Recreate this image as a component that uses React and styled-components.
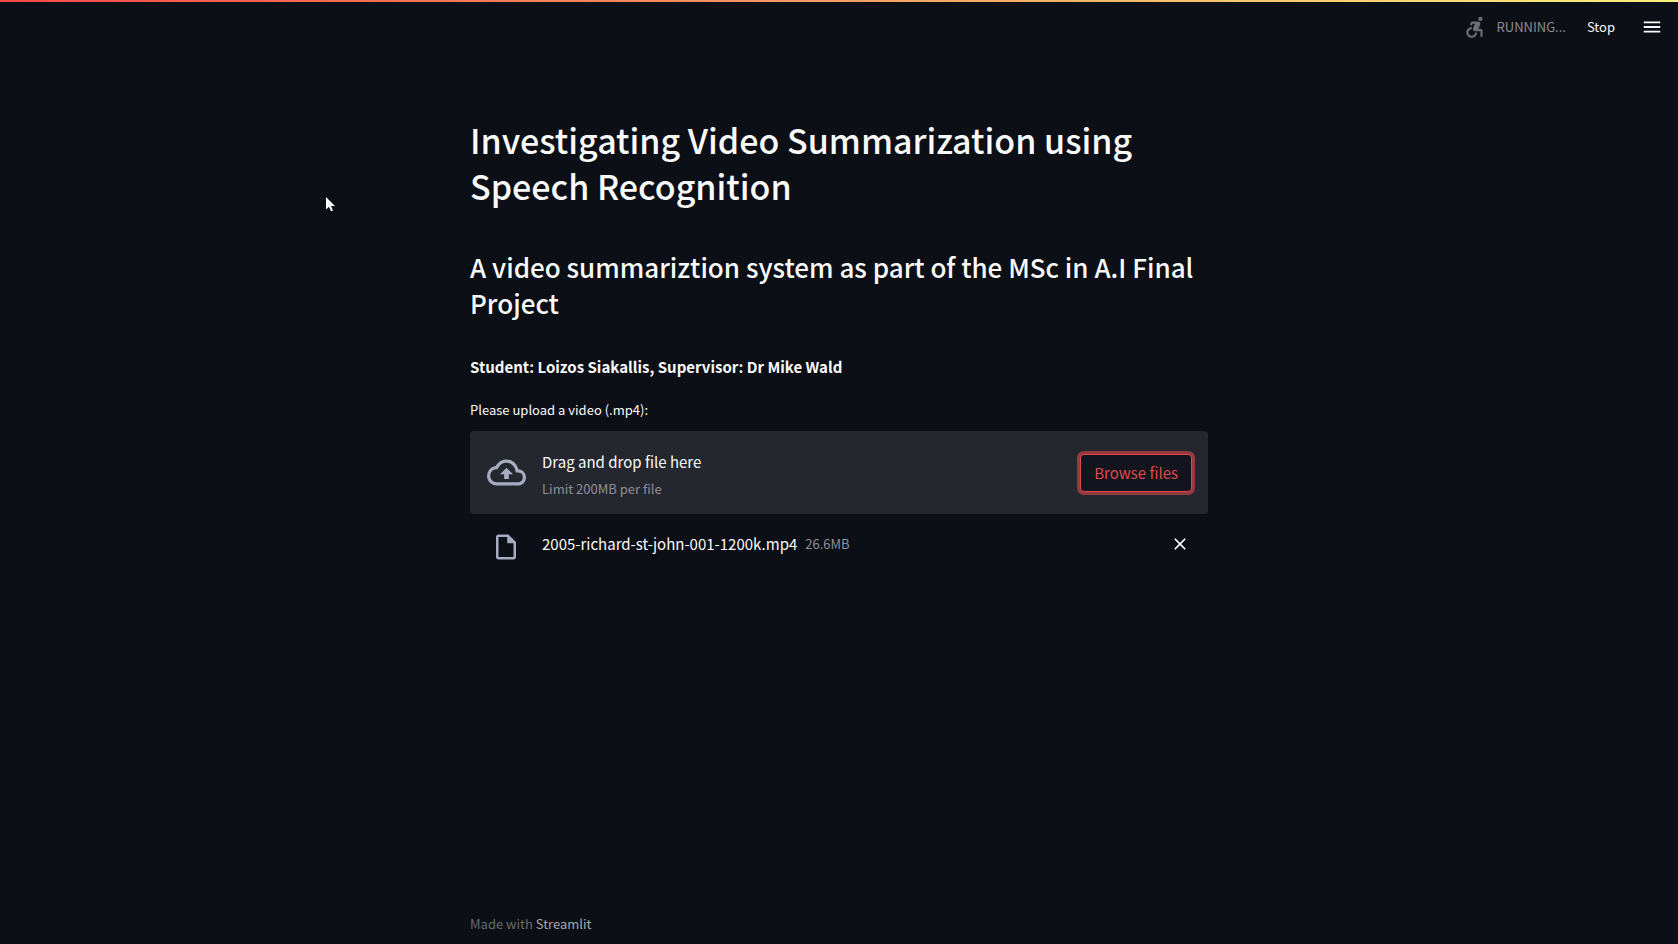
import React from "react";
import styled, { createGlobalStyle } from "styled-components";
import {
  MdAccessibleForward,
  MdMenu,
  MdOutlineCloudUpload,
  MdOutlineInsertDriveFile,
  MdClose,
} from "react-icons/md";

const GlobalStyle = createGlobalStyle`
  *, *::before, *::after { box-sizing: border-box; }
  body {
    margin: 0;
    background: #0c0f16;
    color: #fafafa;
    font-family: "Noto Sans CJK JP", "Noto Sans", sans-serif;
    font-size: 15px;
    line-height: 24px;
  }
  button { font: inherit; cursor: pointer; }
`;

const Page = styled.div`
  min-height: 100vh;
  display: flex;
  flex-direction: column;
`;

const Decoration = styled.div`
  height: 2px;
  background: linear-gradient(90deg, #f84a4a, #f7f27c);
`;

const Toolbar = styled.header`
  height: 49px;
  padding: 0 15px;
  display: flex;
  align-items: center;
  justify-content: flex-end;
  font-size: 13px;
`;

const Status = styled.div`
  display: flex;
  align-items: center;
  gap: 9px;
  color: #8a8c94;

  svg { color: #6d6e72; }
`;

const PlainButton = styled.button`
  display: flex;
  align-items: center;
  padding: 0;
  border: 0;
  background: none;
  color: #fafafa;
`;

const StopButton = styled(PlainButton)`
  margin: 0 26px 0 21px;
`;

const Main = styled.main`
  width: 100%;
  max-width: 770px;
  margin: 0 auto;
  padding: 66px 16px 0;
  display: flex;
  flex-direction: column;
`;

const Title = styled.h1`
  margin: 0;
  padding: 0 0 40px;
  font-size: 34px;
  font-weight: 500;
  line-height: 46px;
`;

const Subtitle = styled.h2`
  margin: 0;
  padding: 0 0 34px;
  font-size: 26px;
  font-weight: 500;
  line-height: 36px;
`;

const Credits = styled.p`
  margin: 0 0 19px;
  font-weight: 700;
`;

const Label = styled.label`
  margin-bottom: 9px;
  font-size: 13px;
`;

const Dropzone = styled.section`
  display: flex;
  align-items: center;
  padding: 0 16px;
  min-height: 83px;
  border-radius: 4px;
  background: #25272f;
`;

const IconCell = styled.span`
  flex: none;
  width: 40px;
  margin-right: 16px;
  display: flex;
  justify-content: center;
  color: #a9abc1;
`;

const Instructions = styled.div`
  flex: 1;
  padding-top: 6px;
  display: flex;
  flex-direction: column;
  gap: 3px;
`;

const Muted = styled.small`
  font-size: 13px;
  color: #8f9096;
`;

const HiddenInput = styled.input`
  display: none;
`;

const BrowseButton = styled.button`
  height: 38px;
  padding: 0 13px;
  border: 1px solid #e04848;
  border-radius: 4px;
  background: #12151d;
  color: #dd4a4c;
  box-shadow: 0 0 0 3px #943a42;
`;

const FileRow = styled.div`
  display: flex;
  align-items: flex-start;
  padding: 18px 16px 0;
`;

const FileInfo = styled.div`
  flex: 1;
  display: flex;
  gap: 8px;
`;

const RemoveButton = styled(PlainButton)`
  height: 24px;
  margin-right: 2px;
`;

const Footer = styled.footer`
  width: 100%;
  max-width: 770px;
  margin: auto auto 0;
  padding: 0 16px 8px;
  color: #6a6b70;
  font-size: 13px;

  a { color: #a3a8b0; text-decoration: none; }
`;

const Pointer = styled.svg`
  position: absolute;
  left: 325px;
  top: 196px;
`;

export default function App() {
  const fileInput = React.useRef(null);
  return (
    <Page>
      <GlobalStyle />
      <Decoration />
      <Toolbar>
        <Status>
          <MdAccessibleForward size={26} />
          <span>RUNNING...</span>
        </Status>
        <StopButton type="button">Stop</StopButton>
        <PlainButton type="button" aria-label="Menu">
          <MdMenu size={22} />
        </PlainButton>
      </Toolbar>
      <Main>
        <Title>Investigating Video Summarization using Speech Recognition</Title>
        <Subtitle>A video summariztion system as part of the MSc in A.I Final Project</Subtitle>
        <Credits>Student: Loizos Siakallis, Supervisor: Dr Mike Wald</Credits>
        <Label htmlFor="video">Please upload a video (.mp4):</Label>
        <Dropzone>
          <IconCell><MdOutlineCloudUpload size={39} /></IconCell>
          <Instructions>
            <span>Drag and drop file here</span>
            <Muted>Limit 200MB per file</Muted>
          </Instructions>
          <HiddenInput id="video" type="file" accept=".mp4" ref={fileInput} />
          <BrowseButton type="button" onClick={() => fileInput.current.click()}>
            Browse files
          </BrowseButton>
        </Dropzone>
        <FileRow>
          <IconCell><MdOutlineInsertDriveFile size={30} /></IconCell>
          <FileInfo>
            <span>2005-richard-st-john-001-1200k.mp4</span>
            <Muted>26.6MB</Muted>
          </FileInfo>
          <RemoveButton type="button" aria-label="Remove file">
            <MdClose size={20} />
          </RemoveButton>
        </FileRow>
      </Main>
      <Footer>
        Made with <a href="https://streamlit.io">Streamlit</a>
      </Footer>
      <Pointer width="11" height="17" viewBox="0 0 11 17" aria-hidden="true">
        <path d="M1 1v12.5l3-2.8 2 4.6 2-.9-2-4.4h4z" fill="#fff" />
      </Pointer>
    </Page>
  );
}
